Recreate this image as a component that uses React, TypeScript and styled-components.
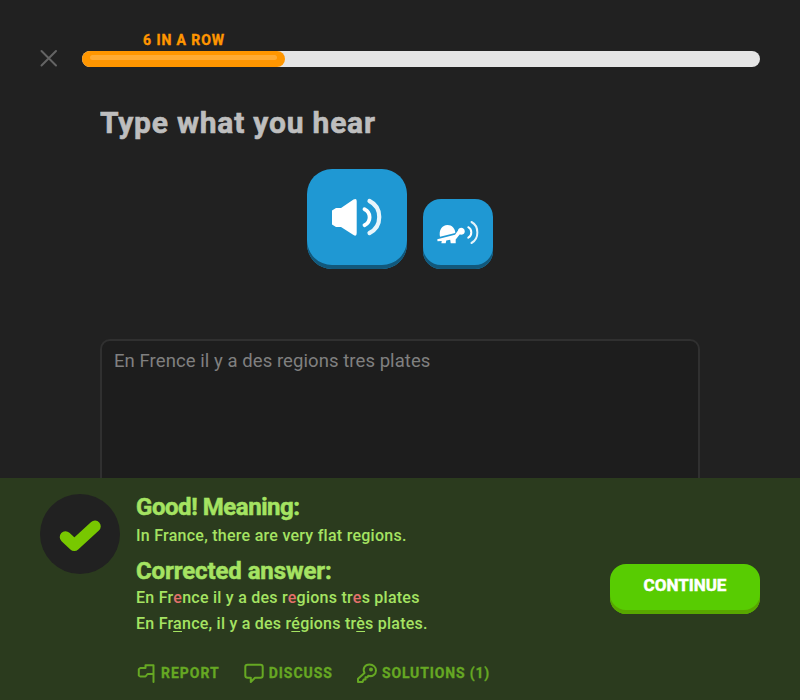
import React from 'react';
import styled, { createGlobalStyle } from 'styled-components';

const GlobalStyle = createGlobalStyle`
  * { box-sizing: border-box; }
  html, body { margin: 0; background: #212121; }
  body { font-family: Roboto, "Open Sans", sans-serif; overflow: hidden; }
  button { font-family: inherit; border: 0; padding: 0; background: none; cursor: pointer; }
`;

const Page = styled.div`
  width: 800px;
  height: 700px;
  display: flex;
  flex-direction: column;
  background: #212121;
  overflow: hidden;
`;

const Header = styled.header`
  flex: none;
  display: flex;
  align-items: flex-end;
  gap: 24px;
  height: 67px;
  padding: 0 40px;
`;

const CloseButton = styled.button`
  width: 18px;
  height: 18px;
  svg { display: block; }
`;

const Progress = styled.div`
  flex: 1;
`;

const Streak = styled.div`
  width: 203px;
  padding-left: 1px;
  height: 16px;
  margin-bottom: 3px;
  line-height: 16px;
  text-align: center;
  font-size: 14px;
  font-weight: 700;
  letter-spacing: 0.92px;
  color: #ff9600;
  -webkit-text-stroke: 0.4px currentColor;
`;

const Track = styled.div`
  height: 16px;
  border-radius: 8px;
  background: #e5e5e5;
`;

const Fill = styled.div`
  width: 203px;
  height: 16px;
  padding: 4px 8px 0;
  border-radius: 8px;
  background: #ff9600;
`;

const Shine = styled.div`
  height: 5px;
  border-radius: 3px;
  background: #ffab33;
`;

const Challenge = styled.main`
  flex: none;
  width: 600px;
  height: 411px;
  margin: 0 auto;
  display: flex;
  flex-direction: column;
  overflow: hidden;
`;

const Title = styled.h1`
  margin: 36px 0 0;
  height: 40px;
  line-height: 40px;
  font-size: 30px;
  font-weight: 700;
  letter-spacing: 0.78px;
  color: #bebebe;
  -webkit-text-stroke: 0.6px currentColor;
  white-space: nowrap;
`;

const Speakers = styled.div`
  display: flex;
  justify-content: center;
  align-items: flex-end;
  gap: 16px;
  margin-top: 26px;
`;

const SpeakerButton = styled.button<{ $size: number; $radius: number }>`
  width: ${(p) => p.$size}px;
  height: ${(p) => p.$size}px;
  border-radius: ${(p) => p.$radius}px;
  background: #1f98d3;
  box-shadow: inset 0 -4px 0 #12587b;
  svg { display: block; }
`;

const Answer = styled.div`
  flex: none;
  height: 180px;
  margin-top: 70px;
  padding: 8px 12px;
  border: 2px solid #303030;
  border-radius: 10px;
  background: #1d1d1d;
  font-size: 18.5px;
  line-height: 24px;
  letter-spacing: 0.07px;
  color: #808080;
  white-space: nowrap;
`;

const Footer = styled.footer`
  flex: 1;
  display: flex;
  align-items: flex-start;
  padding: 16px 40px 0;
  background: #2b3b1e;
`;

const Badge = styled.div`
  flex: none;
  width: 80px;
  height: 80px;
  border-radius: 50%;
  background: #212121;
  svg { display: block; }
`;

const Feedback = styled.div`
  flex: 1;
  margin-left: 16px;
  color: #a5e362;
  white-space: nowrap;
`;

const Heading = styled.h2<{ $spacing: number; $after?: number }>`
  margin: 0 0 ${(p) => p.$after ?? 0}px;
  height: 27px;
  line-height: 27px;
  font-size: 24px;
  font-weight: 700;
  letter-spacing: ${(p) => p.$spacing}px;
  -webkit-text-stroke: 0.5px currentColor;
`;

const Sentence = styled.div<{ $spacing: number; $after?: number }>`
  height: 26px;
  margin-bottom: ${(p) => p.$after ?? 0}px;
  line-height: 26px;
  font-size: 16px;
  font-weight: 500;
  letter-spacing: ${(p) => p.$spacing}px;
`;

const Wrong = styled.span`
  color: #e4706c;
`;

const Fixed = styled.span`
  text-decoration: underline;
  text-decoration-thickness: 1px;
  text-underline-offset: 2px;
  text-decoration-skip-ink: none;
`;

const Actions = styled.div`
  display: flex;
  gap: 24px;
  margin-top: 25px;
`;

const Action = styled.button<{ $spacing: number }>`
  display: flex;
  align-items: center;
  gap: 5px;
  height: 22px;
  font-size: 14px;
  font-weight: 700;
  letter-spacing: ${(p) => p.$spacing}px;
  color: #66a823;
  -webkit-text-stroke: 0.3px currentColor;
  svg { display: block; fill: none; stroke: currentColor; stroke-width: 2; stroke-linejoin: round; stroke-linecap: round; }
`;

const Continue = styled.button`
  flex: none;
  width: 150px;
  height: 50px;
  margin-top: 70px;
  padding-bottom: 8px;
  border-radius: 16px;
  background: #58cc02;
  box-shadow: inset 0 -4px 0 #58a700;
  color: #fff;
  font-size: 17px;
  font-weight: 700;
  letter-spacing: 0;
  -webkit-text-stroke: 0.5px currentColor;
`;

export default function App() {
  return (
    <>
      <GlobalStyle />
      <Page>
        <Header>
          <CloseButton aria-label="Close">
            <svg width="18" height="18" viewBox="0 0 18 18">
              <path d="M1.500 2 16 16.500M16 2 1.500 16.500" stroke="#646464" strokeWidth="2" strokeLinecap="round" />
            </svg>
          </CloseButton>
          <Progress>
            <Streak>6 IN A ROW</Streak>
            <Track>
              <Fill><Shine /></Fill>
            </Track>
          </Progress>
        </Header>

        <Challenge>
          <Title>Type what you hear</Title>
          <Speakers>
            <SpeakerButton $size={100} $radius={25} aria-label="Play">
              <svg width="100" height="100" viewBox="0 0 100 100">
                <path d="M29 39H34L46.500 30.500Q49.700 28.800 49.700 32V64Q49.700 68 46.500 66L34 58H29L25 55.500V41.500Z" fill="#fff" />
                <g fill="none" stroke="#fff" strokeWidth="3.8" strokeLinecap="round">
                  <path d="M57.500 40.200C64.300 43.500 64.300 52.700 57.500 56.200" />
                  <path d="M62.500 32C75.500 38.500 75.500 57.500 62.500 64" stroke="#e8f5fb" strokeWidth="4.200" />
                </g>
              </svg>
            </SpeakerButton>
            <SpeakerButton $size={70} $radius={18} aria-label="Play slowly">
              <svg width="70" height="70" viewBox="0 0 70 70">
                <g fill="#fff">
                  <path d="M17 37.800C15.500 31.500 19 26 24.500 26C29 26 32 29.500 32.300 34Z" />
                  <path d="M14.300 40.300 32 35.800 35 31.500C35.300 27.800 41.800 27.800 41.800 32.500C41.800 35.500 38.500 36 36.700 35.500L32.700 40.500V44.200H27.700L27.200 40.700L23.300 41.500L22.700 44.200H18.400L18.700 41.900L14.500 42.300Z" />
                </g>
                <g fill="none" stroke="#fff" strokeLinecap="round">
                  <path d="M45.300 28.200C49.300 30.500 49.300 36.500 45.300 38.700" strokeWidth="2" />
                  <path d="M48.500 23C56.300 27.200 56.300 39.800 48.500 44" stroke="#e4f3fa" strokeWidth="2" />
                </g>
              </svg>
            </SpeakerButton>
          </Speakers>
          <Answer>En Frence il y a des regions tres plates</Answer>
        </Challenge>

        <Footer>
          <Badge>
            <svg width="80" height="80" viewBox="0 0 80 80">
              <path d="M25.500 43 34.300 51.300 55 32.300" fill="none" stroke="#78c800" strokeWidth="11.500" strokeLinecap="round" strokeLinejoin="round" />
            </svg>
          </Badge>
          <Feedback>
            <Heading $spacing={-0.45} $after={2}>Good! Meaning:</Heading>
            <Sentence $spacing={0.26} $after={9}>In France, there are very flat regions.</Sentence>
            <Heading $spacing={-0.1}>Corrected answer:</Heading>
            <Sentence $spacing={0.25}>
              En Fr<Wrong>e</Wrong>nce il y a des r<Wrong>e</Wrong>gions tr<Wrong>e</Wrong>s plates
            </Sentence>
            <Sentence $spacing={0.24}>
              En Fr<Fixed>a</Fixed>nce, il y a des r<Fixed>é</Fixed>gions tr<Fixed>è</Fixed>s plates.
            </Sentence>
            <Actions>
              <Action $spacing={0.98}>
                <svg width="20" height="22" viewBox="0 0 20 22">
                  <path d="M17.500 20V3.300H9.500V6H4.300L2.800 7.200V13.500L4.300 14.500H9.500L11.500 12H17.500" />
                </svg>
                REPORT
              </Action>
              <Action $spacing={0.98}>
                <svg width="20" height="22" viewBox="0 0 20 22">
                  <path d="M3.500 2.700H16.500Q18.700 2.700 18.700 5V13.500Q18.700 15.800 16.500 15.800H11L6.800 20V15.800H3.800Q1.300 15.800 1.300 13.500V5Q1.300 2.700 3.500 2.700Z" />
                </svg>
                DISCUSS
              </Action>
              <Action $spacing={0.85}>
                <svg width="20" height="22" viewBox="0 0 20 22">
                  <path d="M7.500 11C5.300 6.500 8 2.500 12.500 2.500C16.500 2.500 19 5.500 19 8.500C19 12.500 15.300 15 11.300 13.800L10.500 15.300H8.500V17.500H6.700L5.500 20H1V16.800Z" />
                  <circle cx="14" cy="7.400" r="1" />
                </svg>
                SOLUTIONS (1)
              </Action>
            </Actions>
          </Feedback>
          <Continue>CONTINUE</Continue>
        </Footer>
      </Page>
    </>
  );
}
